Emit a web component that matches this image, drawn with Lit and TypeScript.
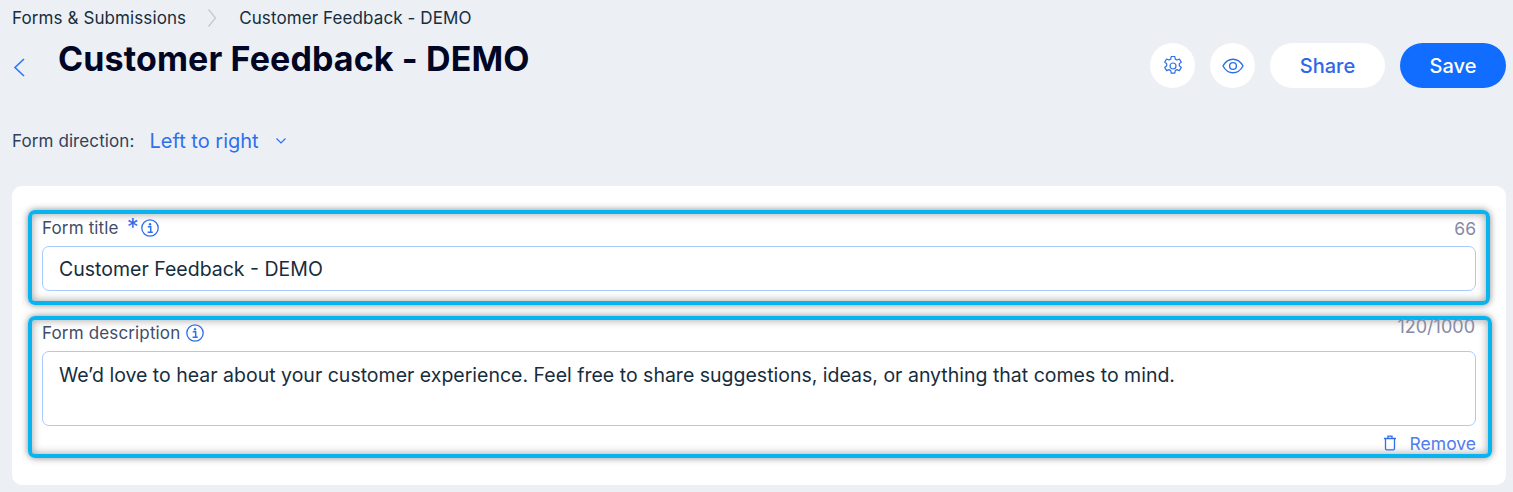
import { LitElement, html, css } from "lit";
import { customElement } from "lit/decorators.js";

const info = html`<svg class="info" width="18" height="18" viewBox="0 0 18 18" fill="none">
  <circle cx="9" cy="9" r="8.2" stroke="#2f6fed" stroke-width="1.3"/>
  <circle cx="9" cy="5.2" r="1.2" fill="#2f6fed"/>
  <path d="M6.8 7.8H9.7V13M6.600 13.200H11.800" stroke="#2f6fed" stroke-width="1.5"/>
</svg>`;

@customElement("app-root")
export class AppRoot extends LitElement {
  static styles = css`
    :host { display: block; width: 1513px; height: 492px; background: #ecf0f4; overflow: hidden; font-family: "Inter", "Noto Sans", sans-serif; color: #0c1a3a; }
    .page { display: flex; flex-direction: column; padding: 8px 7px 0 12px; }
    .crumbs { display: flex; align-items: center; height: 20px; font-size: 17px; letter-spacing: 0.1px; color: #162d3d; }
    .crumbs .sep { display: flex; margin: 0 22px 0 21px; }
    .head { display: flex; align-items: flex-start; height: 60px; margin-top: 9px; }
    .back { display: flex; width: 46px; padding-top: 20px; }
    h1 { margin: 0; font-size: 34px; font-weight: 700; line-height: 44px; color: #000624; letter-spacing: 0.12px; flex: 1; }
    .actions { display: flex; gap: 15px; margin-top: 6px; }
    .round { width: 45px; height: 45px; border-radius: 50%; background: #fff; display: flex; align-items: center; justify-content: center; }
    .btn { height: 45px; border-radius: 23px; display: flex; align-items: center; justify-content: center; font-size: 20px; font-weight: 500; }
    .share { width: 115px; background: #fff; color: #3067e8; }
    .save { width: 106px; background: #116dff; color: #fff; }
    .dir { display: flex; align-items: center; height: 24px; margin-top: 32px; font-size: 17px; color: #32405c; letter-spacing: 0.1px; }
    .dir .val { color: #2f6fed; font-size: 20px; margin-left: 15px; letter-spacing: 0; }
    .dir svg { margin-left: 16px; }
    .card { margin-top: 33px; height: 299px; background: #fff; border-radius: 10px; padding: 24px 14px 0 16px; box-sizing: border-box; display: flex; flex-direction: column; gap: 11px; }
    .hl { border: 4px solid #07b4f0; border-radius: 7px; box-shadow: 0 0 7px rgba(40,40,40,.55), inset 0 0 9px rgba(40,40,40,.45); box-sizing: border-box; padding: 0 10px; display: flex; flex-direction: column; }
    .hl1 { height: 95px; width: 1462px; }
    .hl2 { height: 142px; width: 1464px; padding-right: 12px; }
    .lab { display: flex; align-items: center; justify-content: space-between; color: #3f4d68; font-size: 17px; letter-spacing: 0.15px; }
    .hl1 .lab { height: 28px; margin-bottom: 4px; }
    .hl2 .lab { height: 26px; margin-bottom: 5px; }
    .lab .l { display: flex; align-items: center; }
    .star { color: #2f6fed; font-size: 24px; margin: 0 0 0 8px; line-height: 20px; height: 20px; }
    .info { margin-left: 2px; }
    .desc .info { margin-left: 6px; }
    .count { color: #868aa5; font-size: 17.5px; letter-spacing: 0; }
    .hl2 .count { font-size: 18px; transform: translateY(-7px); margin-right: 1px; }
    .field { border: 1px solid #a8caff; border-radius: 7px; box-sizing: border-box; height: 45px; padding: 0 16px; display: flex; align-items: center; font-size: 19.5px; color: #162d3d; letter-spacing: 0; }
    .ta { height: 75px; align-items: flex-start; padding-top: 11px; line-height: 24px; }
    .rm { display: flex; justify-content: flex-end; align-items: center; height: 22px; margin-top: 6px; color: #4f7cf0; font-size: 17.5px; letter-spacing: 0; gap: 13px; }
  `;
  render() {
    return html`<div class="page">
      <div class="crumbs"><span>Forms &amp; Submissions</span>
        <span class="sep"><svg width="10" height="20" viewBox="0 0 10 20" fill="none"><path d="M1.5 1.500L8.5 10L1.5 18.500" stroke="#c2c6d2" stroke-width="1.2"/></svg></span>
        <span>Customer Feedback - DEMO</span></div>
      <div class="head">
        <span class="back"><svg width="14" height="20" viewBox="0 0 14 20" fill="none"><path d="M12 2L3 10.5L12 19" stroke="#2f7bf6" stroke-width="1.7"/></svg></span>
        <h1>Customer Feedback - DEMO</h1>
        <div class="actions">
          <span class="round"><svg width="22" height="22" viewBox="0 0 22 22" fill="none" stroke="#2b6fe8" stroke-width="1.2" stroke-linejoin="round"><path d="M9.2 1.5h3.6l.5 2.6 1.7.9 2.4-1 1.9 3.1-2 1.7v2l2 1.7-1.9 3.1-2.4-1-1.7.9-.5 2.6H9.2l-.5-2.6-1.7-.9-2.4 1-1.9-3.1 2-1.7v-2l-2-1.7 1.9-3.1 2.4 1 1.7-.9z"/><circle cx="11" cy="11" r="3"/></svg></span>
          <span class="round"><svg width="22" height="16" viewBox="0 0 22 16" fill="none" stroke="#2b6fe8" stroke-width="1.4"><path d="M1 8C3.5 3.5 7 1.2 11 1.2S18.500 3.500 21 8C18.500 12.500 15 14.800 11 14.800S3.500 12.500 1 8Z"/><circle cx="11" cy="8" r="3.400"/></svg></span>
          <span class="btn share">Share</span>
          <span class="btn save">Save</span>
        </div>
      </div>
      <div class="dir"><span>Form direction:</span><span class="val">Left to right</span>
        <svg width="12" height="8" viewBox="0 0 12 8" fill="none"><path d="M1.500 1.500L6 6L10.500 1.500" stroke="#2f6fed" stroke-width="1.2"/></svg></div>
      <div class="card">
        <div class="hl hl1">
          <div class="lab"><span class="l">Form title<span class="star">*</span>${info}</span><span class="count">66</span></div>
          <div class="field">Customer Feedback - DEMO</div>
        </div>
        <div class="hl hl2">
          <div class="lab"><span class="l desc">Form description${info}</span><span class="count">120/1000</span></div>
          <div class="field ta">We’d love to hear about your customer experience. Feel free to share suggestions, ideas, or anything that comes to mind.</div>
          <div class="rm"><svg width="14" height="16" viewBox="0 0 14 16" fill="none" stroke="#2f6fed" stroke-width="1.300"><path d="M1 3.500H13M5 3.500V1.200H9V3.500M2.500 3.500V13.500Q2.500 14.800 3.800 14.800H10.200Q11.500 14.800 11.500 13.500V3.500"/></svg><span>Remove</span></div>
        </div>
      </div>
    </div>`;
  }
}
